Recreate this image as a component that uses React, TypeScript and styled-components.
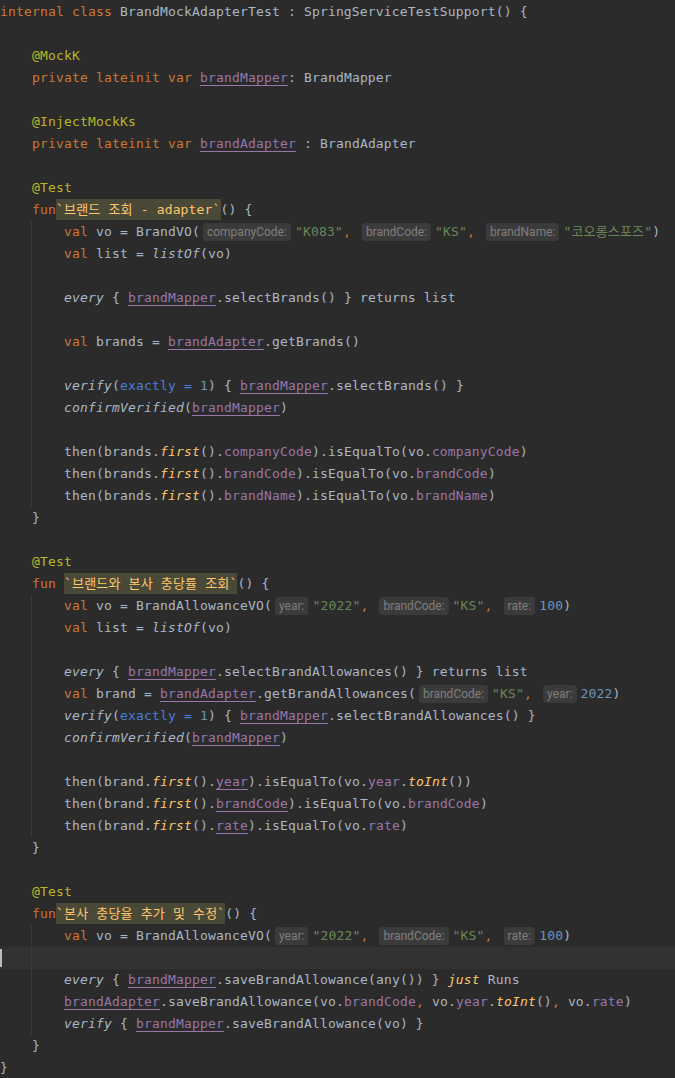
import React from "react";
import styled, { createGlobalStyle, css } from "styled-components";

const GlobalStyle = createGlobalStyle`
  html, body { margin: 0; padding: 0; background: #2b2b2b; }
`;

type Kind =
  | "plain"
  | "kw"
  | "ann"
  | "str"
  | "num"
  | "prop"
  | "propU"
  | "ext"
  | "call"
  | "named"
  | "test"
  | "hint";

type Tok = [Kind, string];

interface LineDef {
  indent: number;
  toks: Tok[];
  current?: boolean;
}

const kindStyles: Record<string, ReturnType<typeof css>> = {
  plain: css`color: #a9b7c6;`,
  kw: css`color: #cc7832;`,
  ann: css`color: #bbb529;`,
  str: css`color: #6a8759;`,
  num: css`color: #6897bb;`,
  prop: css`color: #9876aa;`,
  propU: css`
    color: #9876aa;
    text-decoration: underline;
    text-decoration-thickness: 1px;
    text-underline-offset: 3px;
  `,
  ext: css`color: #ffc66d; font-style: italic;`,
  call: css`color: #a9b7c6; font-style: italic;`,
  named: css`color: #467cda;`,
};

const Editor = styled.div`
  background: #2b2b2b;
  min-height: 1077px;
  padding-top: 1px;
  font-family: "DejaVu Sans Mono", "Noto Sans CJK KR", monospace;
  font-size: 13px;
  letter-spacing: 0.17px;
  color: #a9b7c6;
  overflow: hidden;
`;

const Line = styled.div<{ $indent: number; $current?: boolean }>`
  height: 22px;
  line-height: 22px;
  white-space: pre;
  padding-left: ${(p) => p.$indent * 32}px;
  background: ${(p) => (p.$current ? "#323232" : "transparent")};
`;

const Body = styled.div`
  position: relative;
  &::before {
    content: "";
    position: absolute;
    left: 31px;
    top: 0;
    bottom: 0;
    width: 1px;
    background: #3a3a3a;
  }
`;

const Token = styled.span<{ $kind: Kind }>`
  ${(p) => kindStyles[p.$kind]}
`;

const TestName = styled.span`
  display: inline-block;
  vertical-align: top;
  line-height: 22px;
  height: 21px;
  color: #ffc66d;
  background: #4a4937;
`;

const Hint = styled.span`
  display: inline-block;
  vertical-align: top;
  margin: 2px 4px 0 3px;
  padding: 0 4px;
  height: 18px;
  line-height: 18px;
  border-radius: 3px;
  background: #3b3b3b;
  color: #7f7f7f;
  font-family: Roboto, "Noto Sans", sans-serif;
  font-size: 12px;
  letter-spacing: 0;
`;

const Caret = styled.span`
  display: inline-block;
  vertical-align: top;
  margin-top: 2px;
  width: 2px;
  height: 18px;
  background: #bbbbbb;
`;

const p = (t: string): Tok => ["plain", t];
const k = (t: string): Tok => ["kw", t];
const a = (t: string): Tok => ["ann", t];
const s = (t: string): Tok => ["str", t];
const n = (t: string): Tok => ["num", t];
const pr = (t: string): Tok => ["prop", t];
const pu = (t: string): Tok => ["propU", t];
const e = (t: string): Tok => ["ext", t];
const c = (t: string): Tok => ["call", t];
const nm = (t: string): Tok => ["named", t];
const tn = (t: string): Tok => ["test", t];
const h = (t: string): Tok => ["hint", t];

const L = (indent: number, ...toks: Tok[]): LineDef => ({ indent, toks });
const blank = (): LineDef => ({ indent: 0, toks: [] });

type Section = { body: boolean; lines: LineDef[] };

const thenLines = (v: string, props: [Tok, string][]): LineDef[] =>
  props.map(([field, voField]) =>
    L(2, p(`then(${v}.`), e("first"), p("()."), field, p(").isEqualTo(vo."), pr(voField), p(")"))
  );

const sections: Section[] = [
  {
    body: false,
    lines: [
      L(0, k("internal class"), p(" BrandMockAdapterTest : SpringServiceTestSupport() {")),
      blank(),
      L(1, a("@MockK")),
      L(1, k("private lateinit var "), pu("brandMapper"), p(": BrandMapper")),
      blank(),
      L(1, a("@InjectMockKs")),
      L(1, k("private lateinit var "), pu("brandAdapter"), p(" : BrandAdapter")),
      blank(),
      L(1, a("@Test")),
      L(1, k("fun"), tn("`브랜드 조회 - adapter`"), p("() {")),
    ],
  },
  {
    body: true,
    lines: [
      L(2, k("val "), p("vo = BrandVO("), h("companyCode:"), s('"K083"'), k(", "), h("brandCode:"), s('"KS"'), k(", "), h("brandName:"), s('"코오롱스포즈"'), p(")")),
      L(2, k("val "), p("list = "), c("listOf"), p("(vo)")),
      blank(),
      L(2, c("every"), p(" { "), pu("brandMapper"), p(".selectBrands() } returns list")),
      blank(),
      L(2, k("val "), p("brands = "), pu("brandAdapter"), p(".getBrands()")),
      blank(),
      L(2, c("verify"), p("("), nm("exactly ="), p(" "), n("1"), p(") { "), pu("brandMapper"), p(".selectBrands() }")),
      L(2, c("confirmVerified"), p("("), pu("brandMapper"), p(")")),
      blank(),
      ...thenLines("brands", [
        [pr("companyCode"), "companyCode"],
        [pr("brandCode"), "brandCode"],
        [pr("brandName"), "brandName"],
      ]),
    ],
  },
  {
    body: false,
    lines: [
      L(1, p("}")),
      blank(),
      L(1, a("@Test")),
      L(1, k("fun "), tn("`브랜드와 본사 충당률 조회`"), p("() {")),
    ],
  },
  {
    body: true,
    lines: [
      L(2, k("val "), p("vo = BrandAllowanceVO("), h("year:"), s('"2022"'), k(", "), h("brandCode:"), s('"KS"'), k(", "), h("rate:"), n("100"), p(")")),
      L(2, k("val "), p("list = "), c("listOf"), p("(vo)")),
      blank(),
      L(2, c("every"), p(" { "), pu("brandMapper"), p(".selectBrandAllowances() } returns list")),
      L(2, k("val "), p("brand = "), pu("brandAdapter"), p(".getBrandAllowances("), h("brandCode:"), s('"KS"'), k(", "), h("year:"), n("2022"), p(")")),
      L(2, c("verify"), p("("), nm("exactly ="), p(" "), n("1"), p(") { "), pu("brandMapper"), p(".selectBrandAllowances() }")),
      L(2, c("confirmVerified"), p("("), pu("brandMapper"), p(")")),
      blank(),
      L(2, p("then(brand."), e("first"), p("()."), pu("year"), p(").isEqualTo(vo."), pr("year"), p("."), e("toInt"), p("())")),
      L(2, p("then(brand."), e("first"), p("()."), pu("brandCode"), p(").isEqualTo(vo."), pr("brandCode"), p(")")),
      L(2, p("then(brand."), e("first"), p("()."), pu("rate"), p(").isEqualTo(vo."), pr("rate"), p(")")),
    ],
  },
  {
    body: false,
    lines: [
      L(1, p("}")),
      blank(),
      L(1, a("@Test")),
      L(1, k("fun"), tn("`본사 충당율 추가 및 수정`"), p("() {")),
    ],
  },
  {
    body: true,
    lines: [
      L(2, k("val "), p("vo = BrandAllowanceVO("), h("year:"), s('"2022"'), k(", "), h("brandCode:"), s('"KS"'), k(", "), h("rate:"), n("100"), p(")")),
      { indent: 0, toks: [], current: true },
      L(2, c("every"), p(" { "), pu("brandMapper"), p(".saveBrandAllowance(any()) } "), e("just"), p(" Runs")),
      L(2, pu("brandAdapter"), p(".saveBrandAllowance(vo."), pr("brandCode"), k(", "), p("vo."), pr("year"), p("."), e("toInt"), p("()"), k(", "), p("vo."), pr("rate"), p(")")),
      L(2, c("verify"), p(" { "), pu("brandMapper"), p(".saveBrandAllowance(vo) }")),
    ],
  },
  {
    body: false,
    lines: [L(1, p("}")), L(0, p("}"))],
  },
];

const renderTok = ([kind, text]: Tok, i: number) => {
  if (kind === "test") return <TestName key={i}>{text}</TestName>;
  if (kind === "hint") return <Hint key={i}>{text}</Hint>;
  return (
    <Token key={i} $kind={kind}>
      {text}
    </Token>
  );
};

const CodeLine: React.FC<{ line: LineDef }> = ({ line }) => (
  <Line $indent={line.indent} $current={line.current}>
    {line.current ? <Caret /> : null}
    {line.toks.length ? line.toks.map(renderTok) : line.current ? null : " "}
  </Line>
);

export default function App() {
  return (
    <>
      <GlobalStyle />
      <Editor>
        {sections.map((sec, si) => {
          const content = sec.lines.map((l, li) => <CodeLine key={li} line={l} />);
          return sec.body ? <Body key={si}>{content}</Body> : <React.Fragment key={si}>{content}</React.Fragment>;
        })}
      </Editor>
    </>
  );
}
